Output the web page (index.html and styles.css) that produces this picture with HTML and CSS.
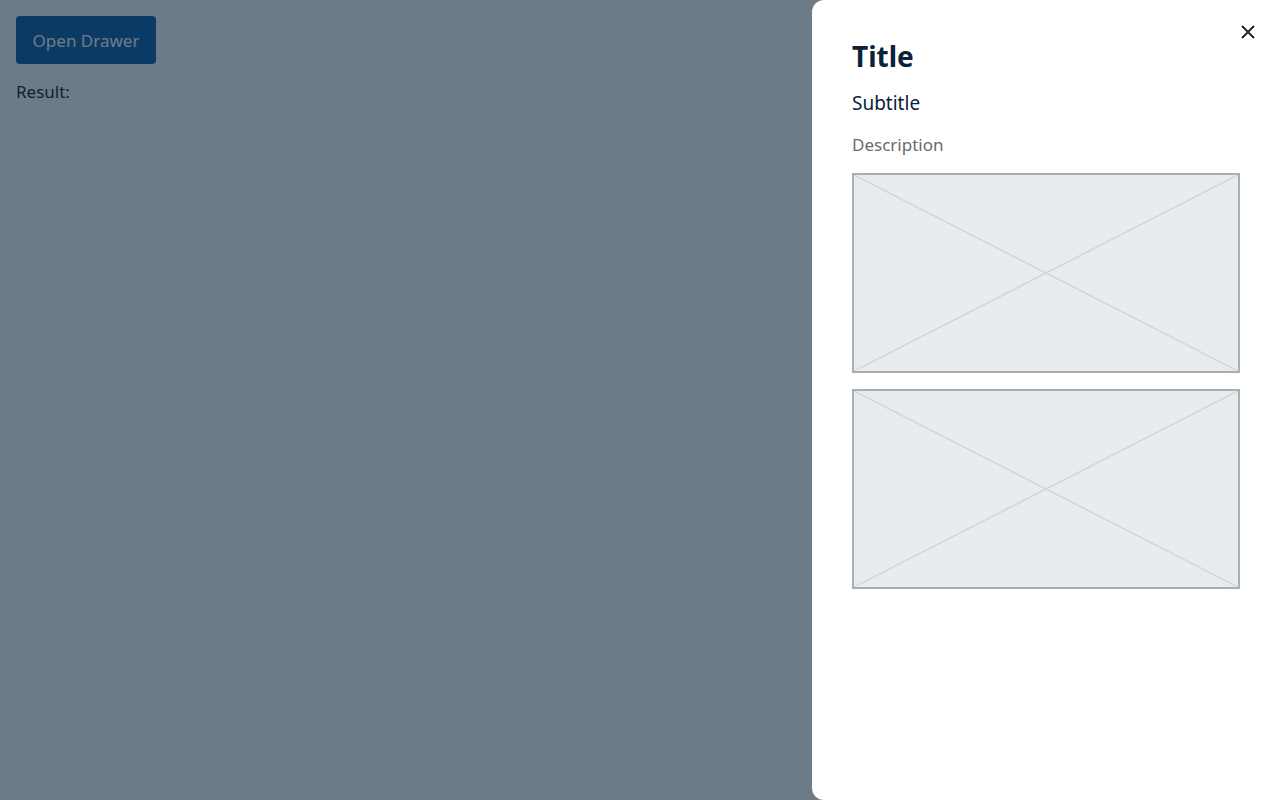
FILE: index.html
```html
<!DOCTYPE html>
<html>
<head>
<meta charset="utf-8">
<link rel="stylesheet" href="styles.css">
</head>
<body>
<div class="page">
  <button class="open-btn">Open Drawer</button>
  <div class="result">Result:</div>
</div>
<div class="overlay"></div>
<aside class="drawer">
  <button class="close" aria-label="Close">
    <svg width="14" height="14" viewBox="0 0 14 14"><path d="M1 1L13 13M13 1L1 13" stroke="#0b2237" stroke-width="1.8" fill="none"/></svg>
  </button>
  <h1 class="title">Title</h1>
  <h2 class="subtitle">Subtitle</h2>
  <p class="desc">Description</p>
  <div class="ph">
    <svg width="100%" height="100%" viewBox="0 0 384 196" preserveAspectRatio="none"><path d="M0 0L384 196M384 0L0 196" stroke="#d0d6da" stroke-width="1.5" fill="none"/></svg>
  </div>
  <div class="ph">
    <svg width="100%" height="100%" viewBox="0 0 384 196" preserveAspectRatio="none"><path d="M0 0L384 196M384 0L0 196" stroke="#d0d6da" stroke-width="1.5" fill="none"/></svg>
  </div>
</aside>
</body>
</html>
```
FILE: styles.css
```css
html, body { margin: 0; height: 100%; }
body {
  font-family: "Noto Sans", "Open Sans", sans-serif;
  background: #ffffff;
  color: #0b2237;
}
.page { padding: 16px; }
.open-btn {
  font-family: inherit;
  font-size: 17px;
  color: #ffffff;
  background: #0a5fa8;
  border: 0;
  border-radius: 4px;
  width: 140px;
  height: 48px;
  padding: 0;
}
.result { margin-top: 16px; font-size: 17px; line-height: 24px; }
.overlay {
  position: fixed; inset: 0;
  background: rgba(11, 34, 55, 0.6);
}
.drawer {
  position: fixed; top: 0; right: 0; bottom: 0;
  width: 468px;
  box-sizing: border-box;
  background: #fff;
  border-radius: 12px 0 0 12px;
  padding: 38px 40px 40px 40px;
  display: flex; flex-direction: column;
}
.close {
  position: absolute; top: 25px; right: 25px;
  width: 14px; height: 14px; padding: 0;
  border: 0; background: none; display: flex;
}
.title { margin: 0; font-size: 28px; line-height: 36px; font-weight: 700; }
.subtitle { margin: 15px 0 0; font-size: 19px; line-height: 28px; font-weight: 400; }
.desc { margin: 15px 0 0; font-size: 17px; line-height: 26px; color: #666d72; }
.ph {
  margin-top: 16px;
  width: 388px; height: 200px;
  box-sizing: border-box;
  border: 2px solid #a6afb5;
  background: #e8ecee;
  display: flex;
}
.desc + .ph { margin-top: 15px; }
```
